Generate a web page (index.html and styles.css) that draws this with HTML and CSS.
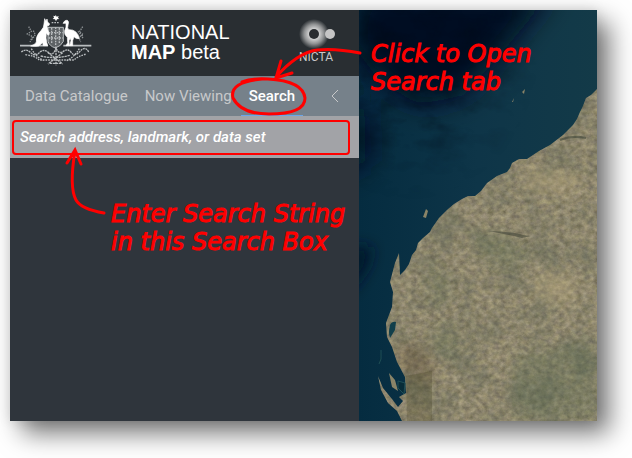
FILE: index.html
```html
<!DOCTYPE html>
<html lang="en">
<head>
<meta charset="utf-8">
<title>National Map beta</title>
<link rel="stylesheet" href="styles.css">
</head>
<body>
<main class="app">
  <section class="panel">
    <header class="header">
      <svg class="crest" viewBox="58 42 216 156" role="img" aria-label="Australian coat of arms">
        <g fill="none" stroke="#b9bdbf">
          <path d="M142 82v42q4 14 22 20q18-6 24-20V82z" fill="#5d6265" stroke-width="3"/>
          <path d="M153 84v48M165 82v56M176 84v46M144 98h42M144 114h42" stroke-width="4" stroke-dasharray="5 3"/>
          <path d="M58 137h84M188 137h84" stroke-width="5"/>
          <path d="M62 156q14-12 28 2t28-2q12-10 26 2t22-14q8 20 22 10t24 4t26-4t26 2" stroke-width="4" stroke-dasharray="6 2"/>
          <path d="M74 164q30 4 42 16h104q12-12 38-18M92 146q16 28 40 36M236 146q-16 26-38 36" stroke-width="4" stroke-dasharray="5 3"/>
          <path d="M120 168q44 10 88-2M142 158l44 34M186 158l-44 34M166 140v56M148 190h36" stroke-width="4" stroke-dasharray="7 2"/>
          <path d="M84 80l8 14l-12 8l16 8l-8 16M98 92l6 12l-10 14M246 80l-10 16l12 8l-14 8l6 14M232 94l8 10l8 12" stroke="#8d9295" stroke-width="4" stroke-dasharray="4 3"/>
          <path d="M153 68h24" stroke-width="4" stroke-dasharray="5 3"/>
        </g>
        <g fill="#fff" stroke="#fff" stroke-width="2">
          <path d="M132 56L136 64L139 57L141 66L147 72L144 77L139 77L141 88L146 102L143 106L137 100L136 114L138 126L141 137H128L126 128L114 138Q103 140 90 138Q104 134 107 126Q105 112 114 100Q122 92 128 82L130 72z"/>
          <path d="M187 70L192 63Q196 60 200 61Q206 64 202 75Q199 84 204 89Q230 88 236 116Q226 118 220 110L216 122V137H207L211 122L209 114L205 122L206 137H196L201 128L200 112Q190 104 192 92Q198 82 196 70z"/>
          <path stroke="none" d="M165 44l3 6l6-2l-2 6l4 3l-7 1l-3 6l-3-6l-7-1l4-4l-2-6l6 2z"/>
        </g>
      </svg>
      <h1 class="title">NATIONAL<br><b>MAP</b> beta</h1>
      <div class="nicta">
        <svg class="nicta-mark" viewBox="0 0 36 30" aria-hidden="true">
          <defs><radialGradient id="glow"><stop offset=".3" stop-color="#d8d8d8"/><stop offset=".65" stop-color="#909293"/><stop offset="1" stop-color="#292e32"/></radialGradient></defs>
          <circle cx="15" cy="15" r="15" fill="url(#glow)"/>
          <circle cx="15" cy="15" r="5" fill="#292c2f"/>
          <circle cx="31" cy="15" r="5" fill="#c5c5c5"/>
        </svg>
        <span>NICTA</span>
      </div>
    </header>
    <nav class="tabs">
      <button type="button">Data Catalogue</button>
      <button type="button">Now Viewing</button>
      <button type="button" class="active">Search</button>
      <button type="button" class="collapse" aria-label="Collapse panel">
        <svg viewBox="0 0 8 14"><path d="M7 1L1 7l6 6"/></svg>
      </button>
    </nav>
    <form class="search">
      <input type="text" aria-label="Search" placeholder="Search address, landmark, or data set">
    </form>
  </section>
  <section class="map" aria-label="Map">
    <svg viewBox="0 0 238 411" preserveAspectRatio="xMinYMin slice">
      <defs>
        <linearGradient id="sea" x1="0" y1="0" x2="1" y2="0"><stop offset="0" stop-color="#052c40"/><stop offset=".5" stop-color="#0e3548"/><stop offset="1" stop-color="#133a48"/></linearGradient>
        <radialGradient id="fade"><stop offset=".4" stop-color="#fff"/><stop offset="1" stop-color="#000"/></radialGradient>
        <mask id="deep"><rect x="-80" y="-110" width="260" height="300" fill="url(#fade)"/></mask>
        <filter id="blur" x="-50%" y="-50%" width="200%" height="200%"><feGaussianBlur stdDeviation="14"/></filter>
        <filter id="soft" x="-50%" y="-50%" width="200%" height="200%"><feGaussianBlur stdDeviation="7"/></filter>
        <filter id="terrain" x="0" y="0" width="100%" height="100%" color-interpolation-filters="sRGB">
          <feTurbulence type="fractalNoise" baseFrequency=".17 .2" numOctaves="4" seed="8"/>
          <feColorMatrix values=".28 .1 0 0 .37  .25 .12 0 0 .345  .2 .08 .08 0 .25  0 0 0 0 1"/>
        </filter>
        <filter id="patches" x="0" y="0" width="100%" height="100%" color-interpolation-filters="sRGB">
          <feTurbulence type="fractalNoise" baseFrequency=".03" numOctaves="4" seed="21"/>
          <feColorMatrix values="0 0 0 0 .3  0 0 0 0 .35  0 0 0 0 .3  3 0 0 0 -1.3"/>
        </filter>
        <filter id="seabed" x="0" y="0" width="100%" height="100%" color-interpolation-filters="sRGB">
          <feTurbulence type="fractalNoise" baseFrequency=".03 .05" numOctaves="4" seed="3"/>
          <feColorMatrix values="0 0 0 0 0  0 0 0 0 .04  0 0 0 0 .09  2.4 0 0 0 -1.05"/>
        </filter>
        <clipPath id="land"><path d="M238 79L232 85L227 88L224 96L221 102L218 109L214 115L204 125L191 135L180 141L168 149L160 149L153 153L151 158L148 162L138 166L128 173L122 181L116 186L109 186L103 189L95 194L88 200L80 208L73 218L71 222L64 228L59 233L57 240L53 245L50 254L46 260L41 265L40 243L36 253L31 272L34 282L33 297L27 313L28 327L33 337L38 352L46 367L47 383L40 387L44 391L39 397L33 389L24 378L19 366L22 380L29 393L38 401L43 411H238z"/></clipPath>
      </defs>
      <rect width="238" height="411" fill="url(#sea)"/>
      <g fill="#020f23" filter="url(#blur)">
        <path d="M0-20H195L145 40L105 85L60 95L20 70L-10 30z"/>
        <path d="M-20 100L6 95L8 150L-20 170z"/>
      </g>
      <path d="M-10 235L14 238L8 258L-10 285z" fill="#03172a" filter="url(#soft)"/>
      <g mask="url(#deep)"><rect width="200" height="200" filter="url(#seabed)" opacity=".5"/></g>
      <g clip-path="url(#land)">
        <rect width="238" height="411" filter="url(#terrain)"/>
        <rect width="238" height="411" filter="url(#patches)" opacity=".3"/>
        <g filter="url(#soft)" opacity=".3">
          <path fill="#52664c" d="M118 220l35 5l20 25l-30 10l-30-20zM75 315l25 5l0 28l-30-8zM155 345l83-15v80h-83zM65 265l20-10l10 30l-20 10z"/>
          <path fill="#c9b583" d="M170 158l50 5l-5 22l-50-4zM185 260l35 10l-10 28l-38-14z"/>
          <path fill="#65482f" d="M36 335l32 2l8 32l-30-3z"/>
        </g>
        <path d="M47 366l26-5v50H48z" fill="#4b4a2c" opacity=".3"/>
        <path d="M130 221q26 1 34 4l8 1l-9 2l-8-2z" fill="#34372d" opacity=".5"/>
        <path d="M201 130q12-5 26-2" stroke="#32392f" stroke-width="2" fill="none" opacity=".5"/>
      </g>
      <path d="M31 315q2-4 6-3l-1 8l-5 8q-2-5 0-13z" fill="#123f4b"/>
      <g fill="#8a8468">
        <path d="M67 199l2 2l-2 7l-3-1zM153 92l2-4l-1 4zM163 82l3-3l-1 5z"/>
        <path d="M30 363l6 7l3 11l-6-4z"/>
      </g>
      <path d="M22 340v9l-2 5M39 371l7 2l-1 11l-6-6z" stroke="#1f4f56" fill="#082c38"/>
    </svg>
  </section>
  <svg class="notes" viewBox="0 0 587 411" preserveAspectRatio="xMinYMin meet">
    <g class="ink">
      <path d="M350 43Q325 38 307 40Q287 43 266 67M271 51L266 68L282 63"/>
      <path d="M94 203Q71 199 66 190Q59 177 65 141M57 153L65 140L71 154"/>
      <path d="M232 72Q242 68 258 69Q293 71 295 88Q295 104 259 104Q231 104 223 88Q219 72 252 69"/>
    </g>
    <rect class="frame" x="3" y="111" width="336" height="33" rx="3"/>
    <text x="361" y="52">Click to Open</text>
    <text x="361" y="80">Search tab</text>
    <text x="101" y="212">Enter Search String</text>
    <text x="101" y="240">in this Search Box</text>
  </svg>
</main>
</body>
</html>
```
FILE: styles.css
```css
* { box-sizing: border-box; }

body {
  display: flex;
  min-height: 100vh;
  margin: 0;
  padding: 10px 35px 37px 10px;
  background: #fff;
  font-family: Roboto, "Liberation Sans", sans-serif;
}

.app {
  position: relative;
  display: flex;
  flex: 1;
  box-shadow: 12px 12px 24px rgba(0, 0, 0, 0.55), 0 0 12px rgba(0, 0, 0, 0.12);
}

.panel {
  flex: 0 0 349px;
  background: #2f353c;
}

.header {
  display: flex;
  align-items: flex-start;
  height: 66px;
  padding: 4px 24px 0 10px;
  background: #292e32;
  color: #fff;
}

.crest { width: 72px; height: 52px; }

.title {
  margin: 8px 0 0 39px;
  font: 20px/20px "Liberation Sans", Arial, sans-serif;
}

.nicta {
  display: flex;
  flex-direction: column;
  width: 36px;
  margin: 5px 0 0 auto;
  color: #c9c9c9;
  font-size: 12px;
  line-height: 16px;
}

.nicta-mark { width: 36px; height: 30px; }

.tabs {
  display: flex;
  gap: 1px;
  height: 40px;
  padding-left: 7px;
  background: #76818a;
}

.tabs button {
  padding: 0 8px;
  border: 0;
  border-bottom: 1px solid transparent;
  background: none;
  color: #c8c9ca;
  font: 15px/38px Roboto, sans-serif;
  white-space: nowrap;
}

.tabs .active {
  border-color: #6aa5ea;
  color: #fff;
  font-weight: 500;
}

.tabs .collapse { margin: 0 12px 0 auto; }

.collapse svg {
  display: block;
  width: 8px;
  height: 14px;
  fill: none;
  stroke: #c8c9ca;
}

.search {
  height: 42px;
  background: #a2a3a7;
}

.search input {
  width: 100%;
  height: 100%;
  padding: 0 10px;
  border: 0;
  background: none;
  font: italic 500 15px Roboto, sans-serif;
}

.search input::placeholder { color: #fff; opacity: 1; }

.map {
  position: relative;
  flex: 1;
  overflow: hidden;
  background: #0c3447;
}

.map svg {
  position: absolute;
  width: 100%;
  height: 100%;
}

.notes {
  position: absolute;
  width: 100%;
  height: 100%;
  pointer-events: none;
}

.ink, .frame {
  fill: none;
  stroke: #f00;
  stroke-width: 2;
  stroke-linecap: round;
}

.ink { stroke-width: 3; }

.notes text {
  fill: #f00;
  stroke: #f00;
  stroke-width: 1;
  font: italic 24px "Segoe Print", "DejaVu Sans", sans-serif;
}
```
